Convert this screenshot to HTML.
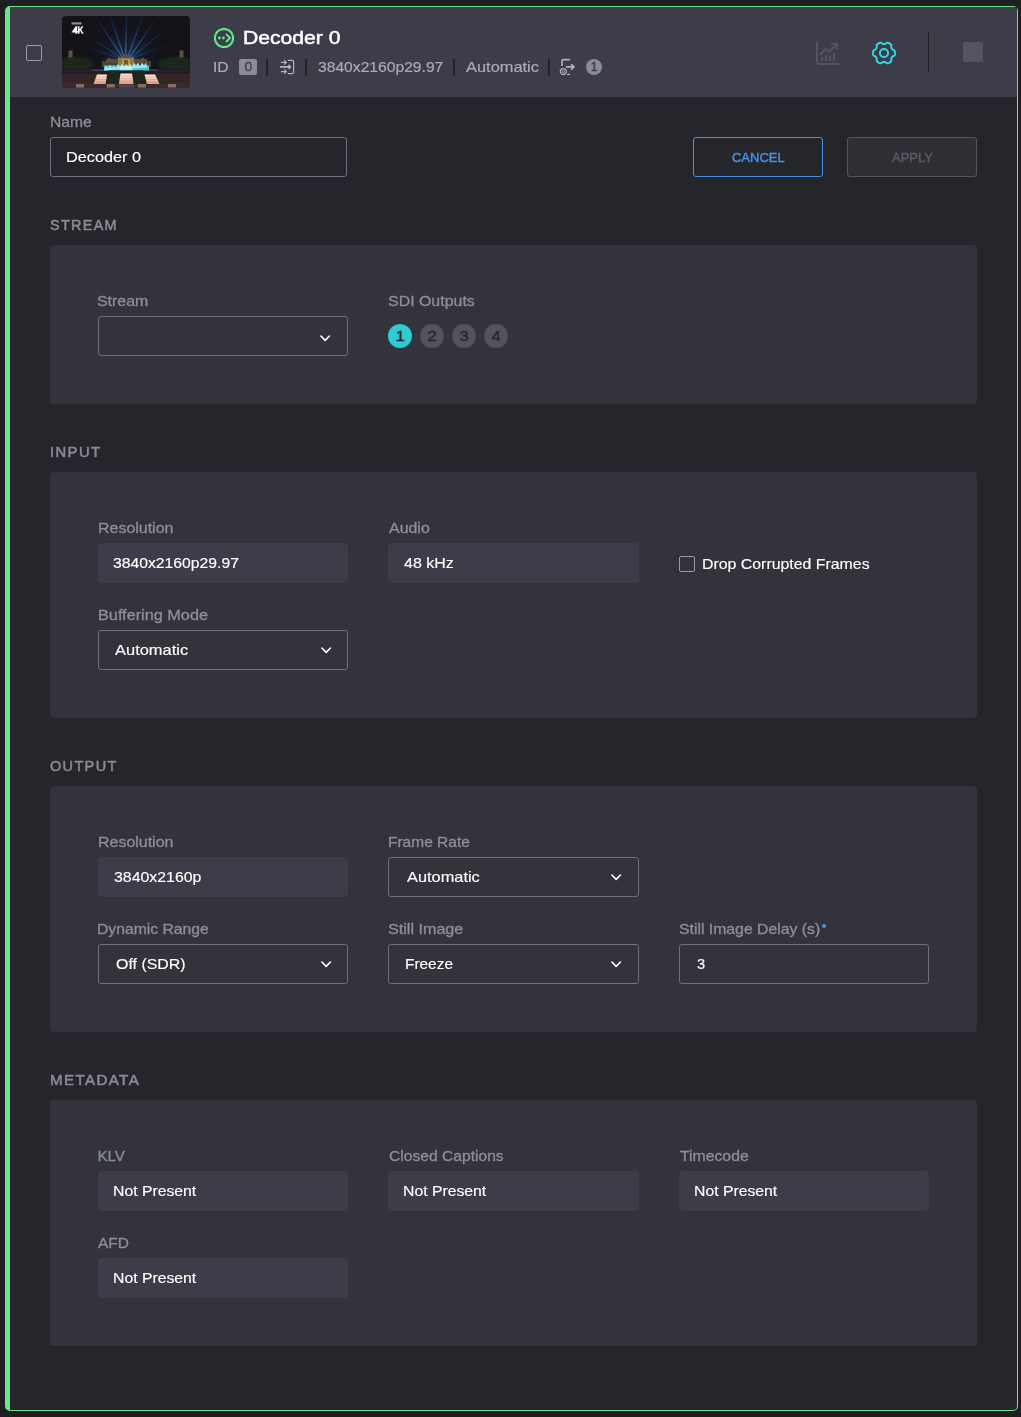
<!DOCTYPE html>
<html>
<head>
<meta charset="utf-8">
<title>Decoder 0</title>
<style>
*{box-sizing:border-box;margin:0;padding:0}
html,body{width:1021px;height:1417px;background:#1e1f21;overflow:hidden}
body{font-family:"Liberation Sans",sans-serif;font-size:15px;color:#fff;position:relative}
.card{position:absolute;left:5px;top:6px;width:1013px;height:1405px;background:#25262b;border:1px solid #6be58a;border-left-width:5px;border-radius:5px;overflow:hidden}
.hdr{position:absolute;left:0;top:0;width:1007px;height:90px;background:#3d3d49}
.abs{position:absolute;white-space:nowrap;line-height:1}
.t{position:absolute;white-space:nowrap;line-height:20px;height:20px}
.lbl{color:#8f8e99;-webkit-text-stroke:.3px #8f8e99}
.w{-webkit-text-stroke:.15px #fff}
.sec{-webkit-text-stroke:.5px #8b8a95;color:#8b8a95;letter-spacing:1.3px;font-size:14px}
.panel{position:absolute;left:50px;width:927px;background:#33333c;border-radius:4px}
.ro{position:absolute;height:40px;width:250px;background:#3d3d49;border-radius:4px}
.inp{position:absolute;height:40px;width:250px;border:1px solid #706f80;border-radius:3px}
.ro .t,.inp .t{top:10px;-webkit-text-stroke:.15px #fff}
.ro .t{left:15px}
.inp .t{left:16px;top:9px}
.chev{position:absolute;right:14.500px;top:15.700px;width:12px;height:8px}
.w251 .chev{right:15.500px}
.circ{position:absolute;width:24px;height:24px;border-radius:50%;background:#525261;color:#26262c;text-align:center;line-height:24px;font-size:15px;top:324px}
.cd{display:inline-block;transform:scaleX(1.120);-webkit-text-stroke:.35px #26262c}
.bt{display:inline-block;transform:scaleX(1.002)}
.vdiv{position:absolute;width:2px;height:17px;background:#222227;top:59px}
.t,#title{transform-origin:0 50%}
/*FIT*/
#title{transform:scaleX(1.112);margin-left:-0.6px}
#h_id{transform:scaleX(1.043);margin-left:-0.8px}
#h_res{transform:scaleX(1.043);margin-left:-0.4px}
#h_auto{transform:scaleX(1.094);margin-left:0.2px}
#l_name{transform:scaleX(1.041);margin-left:-0.4px}
#v_name{transform:scaleX(1.085);margin-left:-0.6px}
#s_stream{transform:scaleX(1.026);margin-left:0.0px}
#s_input{transform:scaleX(1.061);margin-left:-0.4px}
#s_output{transform:scaleX(1.035);margin-left:0.4px}
#s_meta{transform:scaleX(1.079);margin-left:-0.4px}
#l_stream{transform:scaleX(1.061);margin-left:-0.6px}
#l_sdi{transform:scaleX(1.062);margin-left:-0.2px}
#l_res1{transform:scaleX(1.064);margin-left:-0.4px}
#v_res1{transform:scaleX(1.048);margin-left:0.2px}
#l_audio{transform:scaleX(1.063);margin-left:1.2px}
#v_audio{transform:scaleX(1.065);margin-left:0.6px}
#l_drop{transform:scaleX(1.058);margin-left:-1.0px}
#l_buf{transform:scaleX(1.084);margin-left:-0.4px}
#v_buf{transform:scaleX(1.097);margin-left:0.4px}
#l_res2{transform:scaleX(1.064);margin-left:-0.4px}
#v_res2{transform:scaleX(1.059);margin-left:0.8px}
#l_fr{transform:scaleX(1.033);margin-left:-0.2px}
#v_fr{transform:scaleX(1.091);margin-left:1.8px}
#l_dr{transform:scaleX(1.047);margin-left:-0.6px}
#v_dr{transform:scaleX(1.062);margin-left:0.8px}
#l_si{transform:scaleX(1.075);margin-left:-0.2px}
#v_si{transform:scaleX(1.027);margin-left:-0.4px}
#l_sid{transform:scaleX(1.052);margin-left:-0.4px}
#v_sid{transform:scaleX(0.975);margin-left:0.8px}
#l_klv{transform:scaleX(1.000);margin-left:-0.4px}
#v_klv{transform:scaleX(1.051);margin-left:-0.4px}
#l_cc{transform:scaleX(1.042);margin-left:0.8px}
#v_cc{transform:scaleX(1.051);margin-left:-0.4px}
#l_tc{transform:scaleX(1.052);margin-left:1.0px}
#v_tc{transform:scaleX(1.051);margin-left:-0.4px}
#l_afd{transform:scaleX(1.034);margin-left:0.4px}
#v_afd{transform:scaleX(1.051);margin-left:-0.4px}
/*ENDFIT*/
</style>
</head>
<body>
<div class="card"></div>
<div class="hdr" style="left:10px;top:7px"></div>

<!-- header -->
<div class="abs" style="left:26px;top:45px;width:16px;height:16px;border:1px solid #9b9aa6;border-radius:2px"></div>
<svg class="abs" style="left:62px;top:16px" width="128" height="72" viewBox="0 0 128 72">
<defs>
<clipPath id="tc"><rect width="128" height="72" rx="4"/></clipPath>
<filter id="b1" x="-20%" y="-20%" width="140%" height="140%"><feGaussianBlur stdDeviation="0.7"/></filter>
<filter id="b2" x="-20%" y="-20%" width="140%" height="140%"><feGaussianBlur stdDeviation="1.6"/></filter>
<filter id="b0" x="-20%" y="-20%" width="140%" height="140%"><feGaussianBlur stdDeviation="0.35"/></filter>
<radialGradient id="glow" gradientUnits="userSpaceOnUse" cx="64" cy="42" r="46"><stop offset="0" stop-color="#24406e" stop-opacity=".55"/><stop offset=".5" stop-color="#1a2744" stop-opacity=".25"/><stop offset="1" stop-color="#121218" stop-opacity="0"/></radialGradient>
<radialGradient id="beam" gradientUnits="userSpaceOnUse" cx="64" cy="42" r="52"><stop offset="0" stop-color="#3f7fd0"/><stop offset=".35" stop-color="#2a4f92"/><stop offset="1" stop-color="#1a2a50" stop-opacity=".25"/></radialGradient>
<linearGradient id="casc" x1="0" y1="0" x2="0" y2="1"><stop offset="0" stop-color="#ffe9da"/><stop offset=".5" stop-color="#f4c9b4"/><stop offset="1" stop-color="#d99c88"/></linearGradient>
</defs>
<g clip-path="url(#tc)">
<rect width="128" height="72" fill="#121217"/>
<rect width="128" height="72" fill="url(#glow)"/>
<g stroke="url(#beam)" stroke-width="1.500" filter="url(#b1)" stroke-linecap="round" opacity=".72">
<line x1="63.500" y1="41" x2="64.500" y2="-1"/><line x1="62" y1="41" x2="48" y2="-1"/><line x1="66" y1="41" x2="81" y2="-1"/>
<line x1="60.500" y1="41.500" x2="32.500" y2="-1"/><line x1="67.500" y1="41.500" x2="96.500" y2="-1"/>
<line x1="59" y1="42" x2="14" y2="11" stroke-opacity=".6"/><line x1="69" y1="42" x2="114" y2="4" stroke-opacity=".7"/>
<line x1="58" y1="42.500" x2="6" y2="24" stroke-opacity=".4"/><line x1="70" y1="42.500" x2="111" y2="26" stroke-opacity=".45"/>
</g>
<!-- 4K logo -->
<g fill="#f2f2f2" filter="url(#b0)"><rect x="9.500" y="6.300" width="10" height="2.200" opacity=".55"/><path d="M9.500 16.500l4-6.300h1.600v4.700h1v1.600h-1v1.300h-1.700v-1.300zM15.800 10.200h1.700v3l2.200-3h1.800l-2.300 3.200 2.500 4.400h-1.900l-1.600-3-.7.900v2.100h-1.700z" /></g>
<!-- trees -->
<g filter="url(#b2)" fill="#1b281d"><ellipse cx="14" cy="48" rx="18" ry="7.500"/><ellipse cx="114" cy="48" rx="18" ry="7.500"/></g>
<!-- towers -->
<g fill="#5e5040" filter="url(#b1)"><rect x="6.500" y="34.500" width="4" height="7"/><rect x="117.500" y="34.500" width="4" height="7"/></g>
<!-- palace -->
<g filter="url(#b1)"><rect x="40" y="45" width="49" height="6" fill="#4b4030"/><rect x="44" y="43" width="41" height="4" fill="#5a4b35"/><rect x="56" y="41.500" width="16" height="9" fill="#8f7a45"/><rect x="60" y="43" width="8" height="7" fill="#b99c4c"/><rect x="62.200" y="44" width="3.600" height="5" fill="#6b5326"/><path d="M60 42q4-8 8 0z" fill="#5a4d3c"/><rect x="46" y="42" width="2.500" height="4" fill="#5e503c"/><rect x="79.500" y="42" width="2.500" height="4" fill="#5e503c"/></g>
<!-- ground -->
<rect x="0" y="53" width="128" height="6" fill="#231c24" filter="url(#b1)"/>
<rect x="0" y="58" width="128" height="14" fill="#33262a"/>
<rect x="0" y="67" width="128" height="5" fill="#3b2b2b"/>
<g filter="url(#b1)" fill="#2c2430" opacity=".9"><rect x="2" y="54.500" width="28" height="1.600"/><rect x="96" y="54.500" width="30" height="1.600"/><rect x="30" y="53.500" width="12" height="1.500" fill="#4a4454"/><rect x="86" y="53.500" width="10" height="1.500" fill="#4a4454"/></g>
<!-- fountain -->
<g filter="url(#b1)"><rect x="42" y="49.500" width="45" height="5" fill="#4cc3d8"/><path d="M42 54.500l2-5 2 3 2-4 2 4 2-3 2 3 2-5 2 4 2-4 2 5 2-5 2 4 2-4 2 4 2-5 2 3 2-3 2 4 2-4 2 3 2-3 1 5z" fill="#9fe9f2"/><rect x="58" y="50" width="12" height="4" fill="#d8f6f8" opacity=".7"/></g>
<!-- hedges -->
<g filter="url(#b1)" fill="#1b261a"><path d="M47 54.500h10.500l-1.500 13.500h-12z"/><path d="M70.500 54.500h10.500l3 13.500h-12z"/><path d="M30 57h8l-5 11h-7z" fill="#2a2a1e"/><path d="M90 57h8l6 11h-8z" fill="#2a2a1e"/></g>
<!-- cascades -->
<g filter="url(#b0)"><path d="M35 58.500h10l-1.500 9.500h-12z" fill="url(#casc)"/><path d="M58.500 57.500h11.500l1.500 10.500h-14.500z" fill="url(#casc)"/><path d="M82.500 58.500h10.500l4.500 9.500h-12.500z" fill="url(#casc)"/>
<g stroke="#b9786a" stroke-width=".5" opacity=".7"><path d="M33 61h12M32.500 63.500h12M32 66h12M58 60h13M57.500 62.500h14M57 65h15M83 61h12M84 63.500h12M84.500 66h12.500"/></g></g>
<!-- bottom blocks -->
<g filter="url(#b0)" fill="#8a6c64"><rect x="14" y="68" width="8" height="3.500"/><rect x="44.700" y="68" width="8" height="3.500"/><rect x="76" y="68" width="8" height="3.500"/><rect x="106" y="68" width="8" height="3.500"/><rect x="57" y="68.500" width="15" height="3" fill="#5a4540"/></g>
</g>
</svg>
<svg class="abs" style="left:214px;top:28px" width="20" height="20" viewBox="0 0 20 20" fill="none" stroke="#66e888" stroke-width="2" stroke-linecap="round" stroke-linejoin="round">
<circle cx="10" cy="10" r="9.100"/><path d="M12.500 6.400L16 10l-3.500 3.500" stroke-width="1.900"/><circle cx="5.400" cy="10" r="1.400" fill="#66e888" stroke="none"/><circle cx="9.500" cy="10" r="1.400" fill="#66e888" stroke="none"/>
</svg>
<div class="abs" id="title" style="left:244px;top:27px;font-size:19px;line-height:22px;-webkit-text-stroke:.5px #fff">Decoder 0</div>

<div class="t lbl" id="h_id" style="left:214px;top:57px;color:#abaab8;-webkit-text-stroke:.2px #abaab8">ID</div>
<div class="abs" style="left:239px;top:59px;width:18px;height:16px;background:#8b8a97;border-radius:2px;color:#3d3c48;font-size:12px;line-height:16px;text-align:center"><span style="display:inline-block;transform:scaleX(1.150);-webkit-text-stroke:.3px #3d3c48">0</span></div>
<div class="vdiv" style="left:266px"></div>
<svg class="abs" style="left:279px;top:59px" width="17" height="17" viewBox="0 0 17 17" fill="none" stroke="#b4b3c3" stroke-width="1.200" stroke-linecap="round" stroke-linejoin="round">
<path d="M9.300 1.300h3.800q1.500 0 1.500 1.500v10.400q0 1.500-1.500 1.500H9.300"/><path d="M2.400 3.400h4.800M5.500 1.600L7.400 3.400 5.500 5.200"/><path d="M2.400 12.600h4.800M5.500 10.800L7.400 12.600 5.500 14.400"/><path d="M1.500 7.900h9.800M10 6.400l1.500 1.500L10 9.400" stroke-width="1.600"/>
</svg>
<div class="vdiv" style="left:305px"></div>
<div class="t" id="h_res" style="left:318px;top:57px;color:#abaab8;-webkit-text-stroke:.2px #abaab8">3840x2160p29.97</div>
<div class="vdiv" style="left:453px"></div>
<div class="t" id="h_auto" style="left:466px;top:57px;color:#abaab8;-webkit-text-stroke:.2px #abaab8">Automatic</div>
<div class="vdiv" style="left:548px"></div>
<svg class="abs" style="left:559px;top:58px" width="18" height="18" viewBox="0 0 18 18" fill="none" stroke="#b4b3c3" stroke-width="1.600" stroke-linecap="butt" stroke-linejoin="round">
<path d="M10.900 1.600H4.500q-1.500 0-1.500 1.500v4.800"/><path d="M7.600 8.900h7M12.600 6.700L15 8.900l-2.400 2.300" stroke-width="1.600" stroke-linecap="round"/><circle cx="4.300" cy="13.600" r="3" stroke-width="1.100"/><circle cx="4.300" cy="13.600" r="1.100" stroke-width=".9"/><path d="M8.700 16.400h1.900" stroke-width="1.200" stroke-linecap="round"/>
</svg>
<div class="abs" style="left:586px;top:59px;width:16px;height:16px;border-radius:50%;background:#8b8a97;color:#3d3c48;font-size:12px;line-height:16px;text-align:center"><span style="display:inline-block;-webkit-text-stroke:.4px #3d3c48">1</span></div>

<svg class="abs" style="left:816px;top:41px" width="24" height="24" viewBox="0 0 24 24" fill="none" stroke="#535362" stroke-width="2" stroke-linecap="butt" stroke-linejoin="miter">
<path d="M1 1v19.500q0 2.500 2.500 2.500H23" stroke-linejoin="round"/><path d="M4.500 13.200L9.800 7.700 13 11l8.200-8.200" stroke-linecap="round" stroke-linejoin="round"/><path d="M15.100 2.800h6.100v5.900"/><path d="M5.900 19.900v-3.800M10 19.900v-5.700M14 19.900V15M18 19.900v-7.700"/>
</svg>
<svg class="abs" style="left:871px;top:39.800px" width="26" height="26" viewBox="0 0 26 26" fill="none" stroke="#2fd8e0" stroke-width="2" stroke-linejoin="round">
<circle cx="13" cy="13" r="4.100"/><path d="M23.99 13.00L23.98 13.38L23.96 13.77L23.92 14.15L23.85 14.53L23.75 14.90L23.59 15.25L23.30 15.57L22.85 15.82L22.33 16.03L21.88 16.23L21.57 16.46L21.35 16.72L21.17 16.98L21.01 17.26L20.85 17.53L20.69 17.81L20.54 18.08L20.39 18.37L20.28 18.69L20.24 19.08L20.29 19.56L20.37 20.12L20.37 20.63L20.24 21.04L20.02 21.36L19.75 21.64L19.45 21.88L19.14 22.11L18.82 22.32L18.50 22.52L18.16 22.70L17.82 22.87L17.47 23.03L17.11 23.16L16.73 23.26L16.34 23.29L15.93 23.20L15.48 22.94L15.04 22.59L14.64 22.31L14.29 22.15L13.96 22.09L13.63 22.07L13.32 22.06L13.00 22.06L12.68 22.06L12.37 22.07L12.04 22.09L11.71 22.15L11.36 22.31L10.96 22.59L10.52 22.94L10.07 23.20L9.66 23.29L9.27 23.26L8.89 23.16L8.53 23.03L8.18 22.87L7.84 22.70L7.50 22.52L7.18 22.32L6.86 22.11L6.55 21.88L6.25 21.64L5.98 21.36L5.76 21.04L5.63 20.63L5.63 20.12L5.71 19.56L5.76 19.08L5.72 18.69L5.61 18.37L5.46 18.08L5.31 17.81L5.15 17.53L4.99 17.26L4.83 16.98L4.65 16.72L4.43 16.46L4.12 16.23L3.67 16.03L3.15 15.82L2.70 15.57L2.41 15.25L2.25 14.90L2.15 14.53L2.08 14.15L2.04 13.77L2.02 13.38L2.01 13.00L2.02 12.62L2.04 12.23L2.08 11.85L2.15 11.47L2.25 11.10L2.41 10.75L2.70 10.43L3.15 10.18L3.67 9.97L4.12 9.77L4.43 9.54L4.65 9.28L4.83 9.02L4.99 8.74L5.15 8.47L5.31 8.19L5.46 7.92L5.61 7.63L5.72 7.31L5.76 6.92L5.71 6.44L5.63 5.88L5.63 5.37L5.76 4.96L5.98 4.64L6.25 4.36L6.55 4.12L6.86 3.89L7.18 3.68L7.50 3.48L7.84 3.30L8.18 3.13L8.53 2.97L8.89 2.84L9.27 2.74L9.66 2.71L10.07 2.80L10.52 3.06L10.96 3.41L11.36 3.69L11.71 3.85L12.04 3.91L12.37 3.93L12.68 3.94L13.00 3.94L13.32 3.94L13.63 3.93L13.96 3.91L14.29 3.85L14.64 3.69L15.04 3.41L15.48 3.06L15.93 2.80L16.34 2.71L16.73 2.74L17.11 2.84L17.47 2.97L17.82 3.13L18.16 3.30L18.50 3.48L18.82 3.68L19.14 3.89L19.45 4.12L19.75 4.36L20.02 4.64L20.24 4.96L20.37 5.37L20.37 5.88L20.29 6.44L20.24 6.92L20.28 7.31L20.39 7.63L20.54 7.92L20.69 8.19L20.85 8.47L21.01 8.74L21.17 9.02L21.35 9.28L21.57 9.54L21.88 9.77L22.33 9.97L22.85 10.18L23.30 10.43L23.59 10.75L23.75 11.10L23.85 11.47L23.92 11.85L23.96 12.23L23.98 12.62z"/>
</svg>
<div class="abs" style="left:928px;top:32px;width:1px;height:40px;background:#1f1f24"></div>
<div class="abs" style="left:963px;top:42px;width:20px;height:20px;background:#535362;border-radius:2.500px"></div>

<!-- name row -->
<div class="t lbl" id="l_name" style="left:50px;top:112px">Name</div>
<div class="inp" style="left:50px;top:137px;width:297px"><div class="t" id="v_name">Decoder 0</div></div>
<div class="abs" id="b_cancel" style="left:693px;top:137px;width:130px;height:40px;border:1px solid #4a8fe8;border-radius:3px;color:#4a8fe8;-webkit-text-stroke:.4px #4a8fe8;font-size:13px;text-align:center;line-height:40px"><span class="bt">CANCEL</span></div>
<div class="abs" id="b_apply" style="left:847px;top:137px;width:130px;height:40px;border:1px solid #55555d;background:#2e2f34;border-radius:3px;color:#5c5c66;-webkit-text-stroke:.4px #5c5c66;font-size:13px;text-align:center;line-height:40px"><span class="bt">APPLY</span></div>

<!-- STREAM -->
<div class="t sec" id="s_stream" style="left:50px;top:215px">STREAM</div>
<div class="panel" style="top:245px;height:159px"></div>
<div class="t lbl" id="l_stream" style="left:98px;top:291px">Stream</div>
<div class="inp" style="left:98px;top:316px"><svg class="chev" style="right:15.300px;top:17.600px" viewBox="0 0 12 8"><path d="M.9 1l4.250 4.400L9.400 1" fill="none" stroke="#fff" stroke-width="1.600" stroke-linecap="round" stroke-linejoin="round"/></svg></div>
<div class="t lbl" id="l_sdi" style="left:388px;top:291px">SDI Outputs</div>
<div class="circ" style="left:388px;background:#2fcbd3"><span class="cd">1</span></div>
<div class="circ" style="left:420px"><span class="cd">2</span></div>
<div class="circ" style="left:452px"><span class="cd">3</span></div>
<div class="circ" style="left:484px"><span class="cd">4</span></div>

<!-- INPUT -->
<div class="t sec" id="s_input" style="left:50px;top:442px">INPUT</div>
<div class="panel" style="top:472px;height:246px"></div>
<div class="t lbl" id="l_res1" style="left:98px;top:518px">Resolution</div>
<div class="ro" style="left:98px;top:543px"><div class="t" id="v_res1">3840x2160p29.97</div></div>
<div class="t lbl" id="l_audio" style="left:388px;top:518px">Audio</div>
<div class="ro" style="left:388px;top:543px;width:251px"><div class="t" id="v_audio">48 kHz</div></div>
<div class="abs" style="left:679px;top:556px;width:16px;height:16px;border:1px solid #9b9aa6;border-radius:2px"></div>
<div class="t w" id="l_drop" style="left:703px;top:554px">Drop Corrupted Frames</div>
<div class="t lbl" id="l_buf" style="left:98px;top:605px">Buffering Mode</div>
<div class="inp" style="left:98px;top:630px"><div class="t" id="v_buf">Automatic</div><svg class="chev" viewBox="0 0 12 8"><path d="M.9 1l4.250 4.400L9.400 1" fill="none" stroke="#fff" stroke-width="1.600" stroke-linecap="round" stroke-linejoin="round"/></svg></div>

<!-- OUTPUT -->
<div class="t sec" id="s_output" style="left:50px;top:756px">OUTPUT</div>
<div class="panel" style="top:786px;height:246px"></div>
<div class="t lbl" id="l_res2" style="left:98px;top:832px">Resolution</div>
<div class="ro" style="left:98px;top:857px"><div class="t" id="v_res2">3840x2160p</div></div>
<div class="t lbl" id="l_fr" style="left:388px;top:832px">Frame Rate</div>
<div class="inp w251" style="left:388px;top:857px;width:251px"><div class="t" id="v_fr">Automatic</div><svg class="chev" viewBox="0 0 12 8"><path d="M.9 1l4.250 4.400L9.400 1" fill="none" stroke="#fff" stroke-width="1.600" stroke-linecap="round" stroke-linejoin="round"/></svg></div>
<div class="t lbl" id="l_dr" style="left:98px;top:919px">Dynamic Range</div>
<div class="inp" style="left:98px;top:944px"><div class="t" id="v_dr">Off (SDR)</div><svg class="chev" viewBox="0 0 12 8"><path d="M.9 1l4.250 4.400L9.400 1" fill="none" stroke="#fff" stroke-width="1.600" stroke-linecap="round" stroke-linejoin="round"/></svg></div>
<div class="t lbl" id="l_si" style="left:388px;top:919px">Still Image</div>
<div class="inp w251" style="left:388px;top:944px;width:251px"><div class="t" id="v_si">Freeze</div><svg class="chev" viewBox="0 0 12 8"><path d="M.9 1l4.250 4.400L9.400 1" fill="none" stroke="#fff" stroke-width="1.600" stroke-linecap="round" stroke-linejoin="round"/></svg></div>
<div class="t lbl" id="l_sid" style="left:679px;top:919px">Still Image Delay (s)</div>
<div class="abs" style="left:822px;top:924px;width:4px;height:4px;border-radius:50%;background:#4a8fe8"></div>
<div class="inp" style="left:679px;top:944px"><div class="t" id="v_sid">3</div></div>

<!-- METADATA -->
<div class="t sec" id="s_meta" style="left:50px;top:1070px">METADATA</div>
<div class="panel" style="top:1100px;height:246px"></div>
<div class="t lbl" id="l_klv" style="left:98px;top:1146px">KLV</div>
<div class="ro" style="left:98px;top:1171px"><div class="t" id="v_klv">Not Present</div></div>
<div class="t lbl" id="l_cc" style="left:388px;top:1146px">Closed Captions</div>
<div class="ro" style="left:388px;top:1171px;width:251px"><div class="t" id="v_cc">Not Present</div></div>
<div class="t lbl" id="l_tc" style="left:679px;top:1146px">Timecode</div>
<div class="ro" style="left:679px;top:1171px"><div class="t" id="v_tc">Not Present</div></div>
<div class="t lbl" id="l_afd" style="left:98px;top:1233px">AFD</div>
<div class="ro" style="left:98px;top:1258px"><div class="t" id="v_afd">Not Present</div></div>
</body>
</html>
